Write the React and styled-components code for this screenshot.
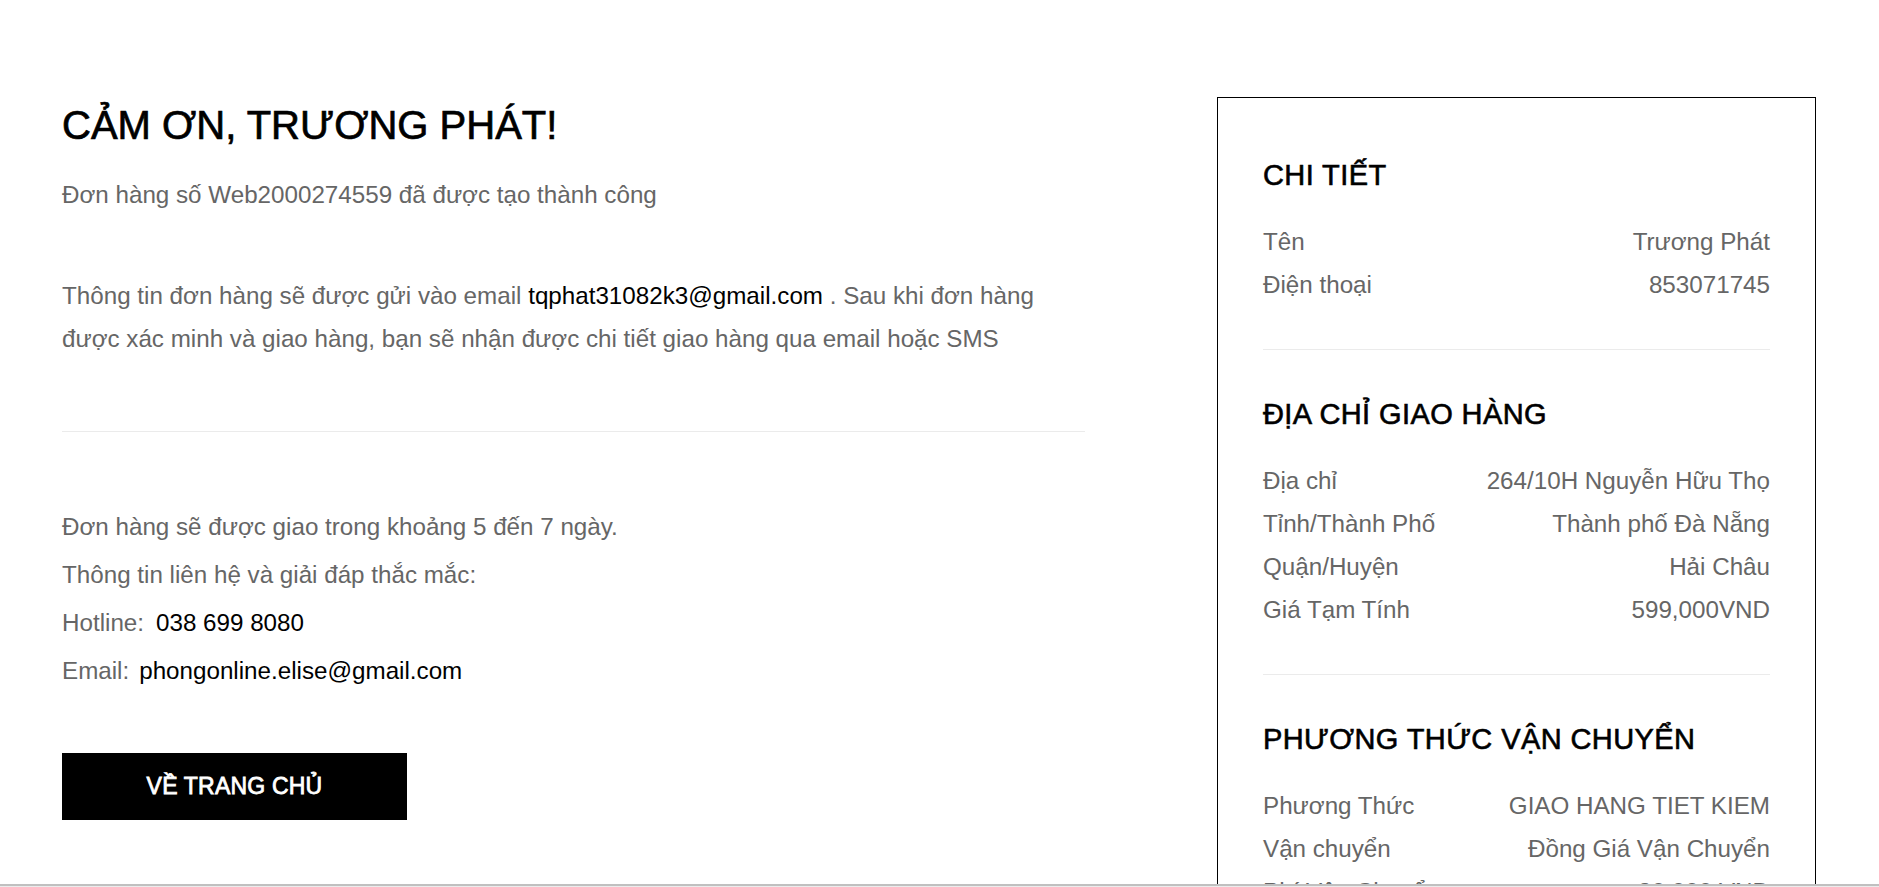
import React from "react";
import styled, { createGlobalStyle } from "styled-components";

const GlobalStyle = createGlobalStyle`
  html, body { margin: 0; padding: 0; background: #fff; }
  body {
    font-family: "Liberation Sans", Arial, Helvetica, sans-serif;
    color: #666;
  }
  * { box-sizing: border-box; }
`;

const Page = styled.div`
  display: grid;
  grid-template-columns: 1023px 599px;
  column-gap: 132px;
  align-items: start;
  padding: 97px 63px 0 62px;
`;

const Main = styled.section`
  display: flex;
  flex-direction: column;
`;

const Title = styled.h1`
  margin: 0;
  font-size: 40px;
  line-height: 56px;
  font-weight: 400;
  color: #000;
  -webkit-text-stroke: 0.7px #000;
`;

const Text = styled.p`
  margin: ${(p) => p.$mt || 0}px 0 0;
  font-size: 24.2px;
  line-height: ${(p) => p.$lh || 43}px;
  color: #666;
`;

const Strong = styled.span`
  color: #000;
  margin-left: ${(p) => p.$ml || 0}px;
`;

const Rule = styled.hr`
  margin: ${(p) => p.$my || 0}px 0;
  border: 0;
  border-top: 1px solid #ebebeb;
  height: 0;
  width: 100%;
`;

const Info = styled.div`
  display: flex;
  flex-direction: column;
`;

const HomeButton = styled.button`
  margin-top: 58px;
  width: 345px;
  height: 67px;
  border: 0;
  border-radius: 0;
  background: #000;
  color: #fff;
  font-family: "Liberation Sans", Arial, Helvetica, sans-serif;
  font-size: 23px;
  font-weight: 400;
  letter-spacing: 0.2px;
  -webkit-text-stroke: 0.8px #fff;
  cursor: pointer;
  display: flex;
  align-items: center;
  justify-content: center;
`;

const Card = styled.aside`
  border: 1px solid #000;
  padding: 13px 45px 40px;
  background: #fff;
`;

const Section = styled.div`
  padding: 46px 0 43px;
  border-bottom: 1px solid #ebebeb;
  &:last-child { border-bottom: 0; }
`;

const SectionTitle = styled.h2`
  margin: 0 0 27px;
  font-size: 29px;
  line-height: 36px;
  font-weight: 400;
  color: #000;
  -webkit-text-stroke: 0.6px #000;
  letter-spacing: 0.4px;
`;

const Row = styled.div`
  display: flex;
  justify-content: space-between;
  align-items: center;
  font-size: 24.2px;
  line-height: 43px;
  color: #666;
`;

const BottomEdge = styled.div`
  position: fixed;
  left: 0;
  right: 0;
  bottom: 0;
  height: 3px;
  background: #ececec;
  border-top: 2px solid #c0c0c0;
`;

const sections = [
  {
    title: "CHI TIẾT",
    rows: [
      ["Tên", "Trương Phát"],
      ["Điện thoại", "853071745"],
    ],
  },
  {
    title: "ĐỊA CHỈ GIAO HÀNG",
    rows: [
      ["Địa chỉ", "264/10H Nguyễn Hữu Thọ"],
      ["Tỉnh/Thành Phố", "Thành phố Đà Nẵng"],
      ["Quận/Huyện", "Hải Châu"],
      ["Giá Tạm Tính", "599,000VND"],
    ],
  },
  {
    title: "PHƯƠNG THỨC VẬN CHUYỂN",
    rows: [
      ["Phương Thức", "GIAO HANG TIET KIEM"],
      ["Vận chuyển", "Đồng Giá Vận Chuyển"],
      ["Phí Vận Chuyển", "30,000 VND"],
      ["Tổng Cộng", "629,000 VND"],
    ],
  },
];

export default function App() {
  return (
    <>
      <GlobalStyle />
      <Page>
        <Main>
          <Title>CẢM ƠN, TRƯƠNG PHÁT!</Title>
          <Text $mt={20}>Đơn hàng số Web2000274559 đã được tạo thành công</Text>
          <Text $mt={58}>
            Thông tin đơn hàng sẽ được gửi vào email{" "}
            <Strong>tqphat31082k3@gmail.com</Strong> . Sau khi đơn hàng được xác
            minh và giao hàng, bạn sẽ nhận được chi tiết giao hàng qua email hoặc
            SMS
          </Text>
          <Rule $my={71} />
          <Info>
            <Text $lh={48}>Đơn hàng sẽ được giao trong khoảng 5 đến 7 ngày.</Text>
            <Text $lh={48}>Thông tin liên hệ và giải đáp thắc mắc:</Text>
            <Text $lh={48}>
              Hotline:<Strong $ml={12}>038 699 8080</Strong>
            </Text>
            <Text $lh={48}>
              Email:<Strong $ml={10}>phongonline.elise@gmail.com</Strong>
            </Text>
          </Info>
          <HomeButton type="button">VỀ TRANG CHỦ</HomeButton>
        </Main>
        <Card>
          {sections.map((s) => (
            <Section key={s.title}>
              <SectionTitle>{s.title}</SectionTitle>
              {s.rows.map(([k, v]) => (
                <Row key={k}>
                  <span>{k}</span>
                  <span>{v}</span>
                </Row>
              ))}
            </Section>
          ))}
        </Card>
      </Page>
      <BottomEdge />
    </>
  );
}
